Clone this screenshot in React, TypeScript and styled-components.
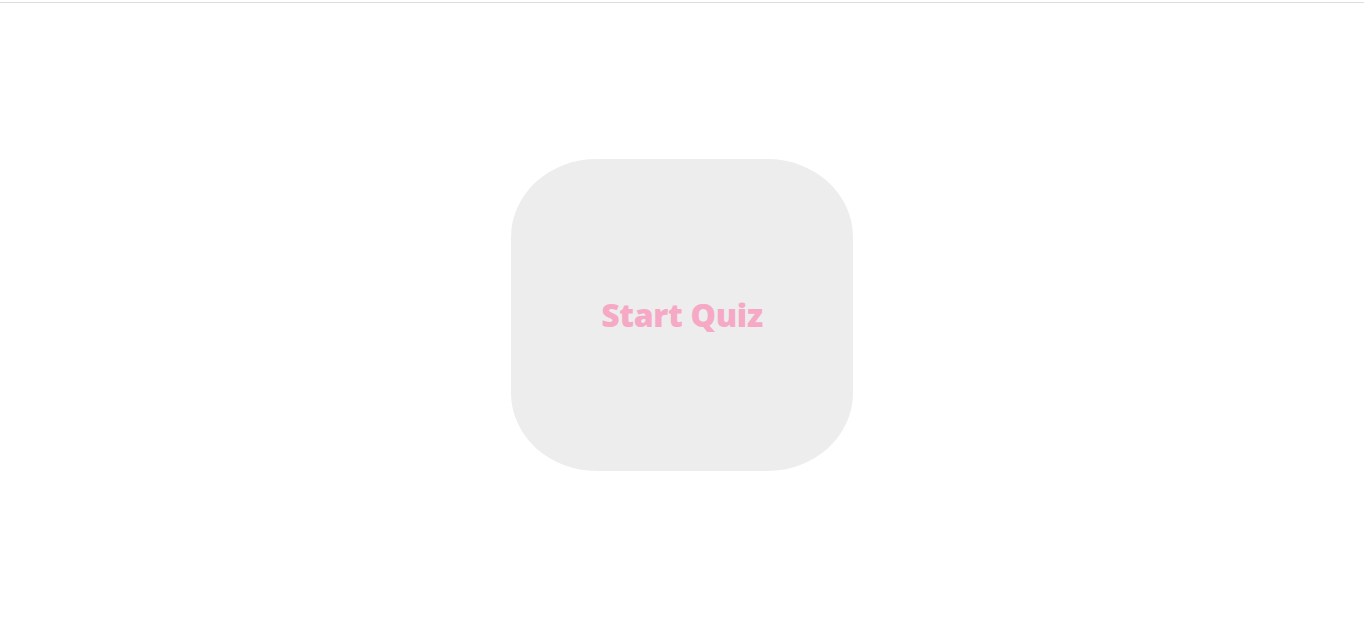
import React from 'react';
import styled, { createGlobalStyle } from 'styled-components';

const GlobalStyle = createGlobalStyle`
  html, body {
    margin: 0;
    padding: 0;
    background: #ffffff;
  }
  body {
    font-family: 'Open Sans', 'Liberation Sans', sans-serif;
  }
`;

const Page = styled.div`
  height: 628px;
  box-sizing: border-box;
  border-top: 1px solid #dddddd;
  margin-top: 2px;
  display: flex;
  align-items: center;
  justify-content: center;
`;

const StartCard = styled.button`
  width: 342px;
  height: 312px;
  margin-top: -3px;
  border: none;
  border-radius: 25%;
  background: #ededed;
  display: flex;
  align-items: center;
  justify-content: center;
  cursor: pointer;
  padding: 0;
`;

const StartLabel = styled.span`
  font-family: 'Open Sans', 'Liberation Sans', sans-serif;
  font-weight: 800;
  font-size: 32px;
  line-height: 1;
  color: #f5a9c5;
  letter-spacing: -0.3px;
`;

const App = () => {
  return (
    <>
      <GlobalStyle />
      <Page>
        <StartCard>
          <StartLabel>Start Quiz</StartLabel>
        </StartCard>
      </Page>
    </>
  );
};

export default App;
